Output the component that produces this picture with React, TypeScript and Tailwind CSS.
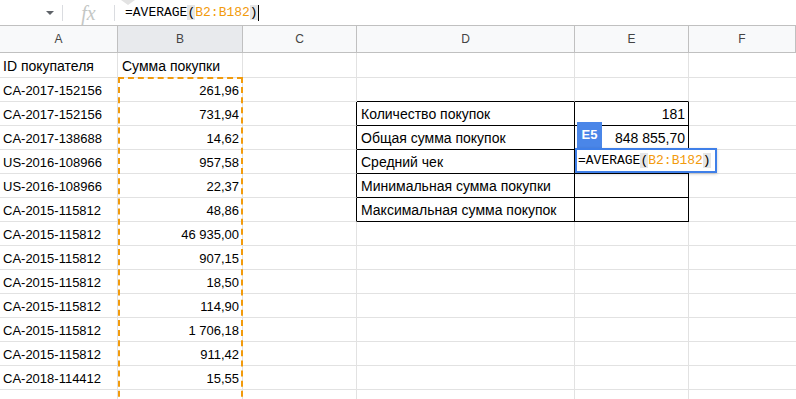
import React from "react";

const COLS = ["A", "B", "C", "D", "E", "F"];
const WIDTHS = ["w-[118px]", "w-[125px]", "w-[114px]", "w-[218px]", "w-[114px]", "w-[107px]"];

const rows: { id: string; sum: string; label?: string; value?: string }[] = [
  { id: "CA-2017-152156", sum: "261,96" },
  { id: "CA-2017-152156", sum: "731,94", label: "Количество покупок", value: "181" },
  { id: "CA-2017-138688", sum: "14,62", label: "Общая сумма покупок", value: "848 855,70" },
  { id: "US-2016-108966", sum: "957,58", label: "Средний чек" },
  { id: "US-2016-108966", sum: "22,37", label: "Минимальная сумма покупки" },
  { id: "CA-2015-115812", sum: "48,86", label: "Максимальная сумма покупок" },
  { id: "CA-2015-115812", sum: "46 935,00" },
  { id: "CA-2015-115812", sum: "907,15" },
  { id: "CA-2015-115812", sum: "18,50" },
  { id: "CA-2015-115812", sum: "114,90" },
  { id: "CA-2015-115812", sum: "1 706,18" },
  { id: "CA-2015-115812", sum: "911,42" },
  { id: "CA-2018-114412", sum: "15,55" },
  { id: "", sum: "" },
];

function Formula() {
  return (
    <span className="whitespace-pre font-['Liberation_Mono',monospace] text-[13px] text-black">
      =AVERAGE<span className="bg-[#e6e6e6]">(</span>
      <span className="text-[#f29b0c]">B2:B182</span>
      <span className="bg-[#e6e6e6]">)</span>
    </span>
  );
}

export default function App() {
  return (
    <div className="relative w-[796px] h-[399px] overflow-hidden bg-white font-['Liberation_Sans',Arial,sans-serif]">
      {/* formula bar */}
      <div className="relative flex items-center h-[26px] border-b border-[#c0c0c0]">
        <div className="absolute left-[121px] top-0 w-0 h-0 border-x-[7px] border-x-transparent border-t-[5px] border-t-[#e3e3e3]" />
        <div className="w-[62px] flex justify-end pr-[8px]">
          <div className="w-0 h-0 border-x-[4px] border-x-transparent border-t-[4px] border-t-[#5f6368]" />
        </div>
        <div className="w-px h-[16px] bg-[#dadce0]" />
        <div className="w-[51px] flex justify-center">
          <span className="font-['Liberation_Serif',serif] italic text-[20px] text-[#c4c7c5] leading-none">fx</span>
        </div>
        <div className="w-px h-[16px] bg-[#dadce0]" />
        <div className="pl-[10px] flex items-center">
          <Formula />
          <div className="w-px h-[16px] bg-black" />
        </div>
      </div>

      {/* column headers */}
      <div className="flex h-[27px] bg-[#f8f9fa] border-b border-[#c0c0c0]">
        {COLS.map((c, i) => (
          <div
            key={c}
            className={`${WIDTHS[i]} shrink-0 flex items-center justify-center border-r border-[#c0c0c0] text-[12px] text-[#444] ${
              c === "B" ? "bg-[#e8eaed]" : ""
            }`}
          >
            {c}
          </div>
        ))}
      </div>

      {/* row 1 */}
      <div className="flex h-[25px] border-b border-[#e2e2e2] text-[14px] text-black">
        <div className={`${WIDTHS[0]} shrink-0 flex items-center pt-[2px] px-[3px] border-r border-[#e2e2e2]`}>ID покупателя</div>
        <div className={`${WIDTHS[1]} shrink-0 flex items-center pt-[2px] px-[4px] border-r border-[#e2e2e2]`}>Сумма покупки</div>
        <div className={`${WIDTHS[2]} shrink-0 border-r border-[#e2e2e2]`} />
        <div className={`${WIDTHS[3]} shrink-0 border-r border-[#e2e2e2]`} />
        <div className={`${WIDTHS[4]} shrink-0 border-r border-[#e2e2e2]`} />
        <div className={`${WIDTHS[5]} shrink-0`} />
      </div>

      {/* data rows */}
      {rows.map((r, idx) => {
        const inTable = idx >= 1 && idx <= 5;
        const tableTop = idx >= 0 && idx <= 5;
        return (
          <div key={idx} className="flex h-[24px] text-[13px] text-black">
            <div className={`${WIDTHS[0]} shrink-0 flex items-center pt-[2px] px-[3px] border-r border-b border-[#e2e2e2]`}>{r.id}</div>
            <div className={`${WIDTHS[1]} shrink-0 flex items-center justify-end pt-[2px] px-[3px] border-r border-b border-[#e2e2e2]`}>{r.sum}</div>
            <div className={`${WIDTHS[2]} shrink-0 border-b border-[#e2e2e2] border-r ${inTable ? "border-r-black" : ""}`} />
            <div
              className={`${WIDTHS[3]} shrink-0 flex items-center pt-[1px] px-[4px] text-[14px] border-r border-b border-[#e2e2e2] ${
                inTable ? "border-r-black" : ""
              } ${tableTop ? "border-b-black" : ""}`}
            >
              {r.label}
            </div>
            <div
              className={`${WIDTHS[4]} shrink-0 flex items-center justify-end pt-[1px] px-[3px] text-[14px] border-r border-b border-[#e2e2e2] ${
                inTable ? "border-r-black" : ""
              } ${tableTop ? "border-b-black" : ""}`}
            >
              {r.value}
            </div>
            <div className={`${WIDTHS[5]} shrink-0 border-b border-[#e2e2e2]`} />
          </div>
        );
      })}

      {/* copy marquee around B2:B182 */}
      <div className="absolute left-[118px] top-[77px] w-[125px] h-[340px] border-2 border-dashed border-[#f29b0c]" />

      {/* cell editor on E5 */}
      <div className="absolute left-[577px] top-[122px] w-[25px] h-[26px] bg-[#4a86e8] text-white text-[13px] font-bold flex items-center justify-center">
        E5
      </div>
      <div className="absolute left-[575px] top-[148px] w-[142px] h-[25px] bg-white border-2 border-[#3f7fe8] flex items-center pl-[1px] shadow-[0_1px_3px_rgba(0,0,0,0.2)]">
        <Formula />
      </div>
    </div>
  );
}
